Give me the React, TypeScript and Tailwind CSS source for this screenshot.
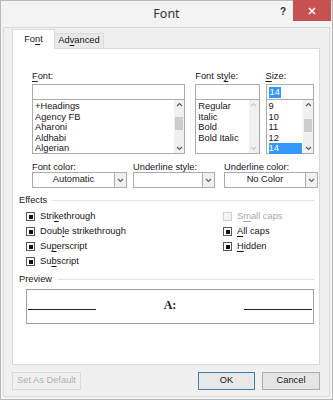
import React from 'react';

const FONT = "font-['Liberation_Sans','Noto_Sans',sans-serif]";

const U = ({ children }: { children: React.ReactNode }) => <span className="underline underline-offset-[1.5px]">{children}</span>;

const UpArrow = ({ dim }: { dim?: boolean }) => (
  <svg width="7" height="5" viewBox="0 0 7 5" className="block">
    <path d="M1 4 L3.5 1.5 L6 4" fill="none" stroke={dim ? '#c8c8c8' : '#606060'} strokeWidth="1.2" />
  </svg>
);

const DownArrow = ({ dim }: { dim?: boolean }) => (
  <svg width="7" height="5" viewBox="0 0 7 5" className="block">
    <path d="M1 1 L3.5 3.5 L6 1" fill="none" stroke={dim ? '#c8c8c8' : '#606060'} strokeWidth="1.2" />
  </svg>
);

interface ListProps {
  items: string[];
  selected?: string;
  thumb?: [number, number];
  dim?: boolean;
}

const ListBox: React.FC<ListProps> = ({ items, selected, thumb, dim }) => (
  <div className="flex h-[55px] border border-[#acacac] bg-white">
    <div className="flex-1 pl-[2px] pr-[1px] pt-[1px] leading-[10.6px]">
      {items.map((it) => (
        <div key={it} className={it === selected ? 'bg-[#3399ff] text-white' : ''}>{it}</div>
      ))}
    </div>
    <div className="flex w-[10px] flex-col items-center justify-between bg-[#f0f0f0] py-[2px]">
      <UpArrow dim={dim} />
      <div className="relative w-full flex-1">
        {thumb && (
          <div className="absolute left-[1px] right-[1px] bg-[#cdcdcd]" style={{ top: thumb[0], height: thumb[1] }} />
        )}
      </div>
      <DownArrow dim={dim} />
    </div>
  </div>
);

const Combo = ({ value, w }: { value?: string; w: string }) => (
  <div className={`flex h-[16px] border border-[#acacac] bg-white ${w}`}>
    <div className="flex flex-1 items-center justify-center leading-none">{value}</div>
    <div className="flex w-[12px] items-center justify-center border-l border-[#acacac] bg-[#f0f0f0]">
      <DownArrow />
    </div>
  </div>
);

const Check = ({ children, disabled }: { children: React.ReactNode; disabled?: boolean }) => (
  <div className={`flex h-[15px] items-center gap-[5px] ${disabled ? 'text-[#a8a8a8]' : ''}`}>
    <div className={`flex h-[9px] w-[9px] items-center justify-center border ${disabled ? 'border-[#d0d0d0] bg-[#f4f4f4]' : 'border-[#555] bg-white'}`}>
      {!disabled && <div className="h-[4px] w-[4px] bg-[#111]" />}
    </div>
    <span>{children}</span>
  </div>
);

const Section = ({ title }: { title: string }) => (
  <div className="flex h-[10px] items-center gap-[5px] leading-[10px]">
    <span>{title}</span>
    <div className="h-px flex-1 bg-[#e3e3e3]" />
  </div>
);

export default function App() {
  return (
    <div className={`flex h-[400px] w-[333px] flex-col border border-[#b9b9b9] bg-[#f3f3f3] text-[9.3px] text-[#151515] ${FONT}`}>
      {/* title bar */}
      <div className="relative flex h-[26px] shrink-0 items-start justify-center">
        <div className="pt-[4px] font-['Noto_Sans',sans-serif] text-[12.5px] text-[#333]">Font</div>
        <div className="absolute left-[279px] top-[3px] text-[10px] font-bold text-[#333]">?</div>
        <div className="absolute right-[1px] top-[-1px] flex h-[21px] w-[38px] items-center justify-center bg-[#c75050]">
          <svg width="8" height="8" viewBox="0 0 8 8">
            <path d="M1 1 L7 7 M7 1 L1 7" stroke="white" strokeWidth="1.6" />
          </svg>
        </div>
      </div>

      {/* body */}
      <div className="mx-[2px] mb-[2px] flex flex-1 flex-col border border-[#dadada] bg-[#f0f0f0] pl-[8px] pr-[9px]">
        {/* tabs */}
        <div className="mt-[1px] flex items-end">
          <div className="relative z-10 mb-[-1px] flex h-[20px] w-[43px] items-center justify-center border border-b-0 border-[#d9d9d9] bg-white">
            Fo<U>n</U>t
          </div>
          <div className="flex h-[15px] w-[49px] items-center justify-center border border-l-0 border-b-0 border-[#d9d9d9] bg-[#e9e9e9]">
            Ad<U>v</U>anced
          </div>
        </div>

        <div className="flex h-[317px] flex-col border border-[#d9d9d9] bg-white pl-[6px] pr-[5px]">
          {/* lists */}
          <div className="mt-[22px] flex pl-[13px]">
            <div className="flex w-[155px] flex-col">
              <div className="mb-[3px] h-[10px] leading-[10px]"><U>F</U>ont:</div>
              <div className="h-[15px] border border-b-0 border-[#acacac] bg-white" />
              <ListBox items={['+Headings', 'Agency FB', 'Aharoni', 'Aldhabi', 'Algerian']} thumb={[10, 13]} />
            </div>
            <div className="ml-[10px] flex w-[65px] flex-col">
              <div className="mb-[3px] h-[10px] leading-[10px]">Font st<U>y</U>le:</div>
              <div className="h-[15px] border border-b-0 border-[#acacac] bg-white" />
              <ListBox items={['Regular', 'Italic', 'Bold', 'Bold Italic']} dim />
            </div>
            <div className="ml-[6px] flex w-[49px] flex-col">
              <div className="mb-[3px] h-[10px] leading-[10px]"><U>S</U>ize:</div>
              <div className="flex h-[15px] items-center border border-b-0 border-[#acacac] bg-white pl-[2px]">
                <span className="bg-[#3399ff] px-[1px] leading-[11px] text-white">14</span>
              </div>
              <ListBox items={['9', '10', '11', '12', '14']} selected="14" thumb={[12, 13]} />
            </div>
          </div>

          {/* combos */}
          <div className="mt-[8px] flex pl-[13px]">
            <div className="flex w-[95px] flex-col">
              <div className="h-[10px] leading-[10px]">Font <U>c</U>olor:</div>
              <Combo value="Automatic" w="w-[95px]" />
            </div>
            <div className="ml-[6px] flex w-[82px] flex-col">
              <div className="h-[10px] leading-[10px]"><U>U</U>nderline style:</div>
              <Combo w="w-[82px]" />
            </div>
            <div className="ml-[9px] flex w-[94px] flex-col">
              <div className="h-[10px] leading-[10px]">Underl<U>i</U>ne color:</div>
              <Combo value="No Color" w="w-[94px]" />
            </div>
          </div>

          {/* effects */}
          <div className="mt-[7px]">
            <Section title="Effects" />
          </div>
          <div className="mt-[4px] flex pl-[7px]">
            <div className="flex w-[197px] flex-col">
              <Check>Stri<U>k</U>ethrough</Check>
              <Check>Doub<U>l</U>e strikethrough</Check>
              <Check>Su<U>p</U>erscript</Check>
              <Check>Su<U>b</U>script</Check>
            </div>
            <div className="flex flex-col">
              <Check disabled>S<U>m</U>all caps</Check>
              <Check><U>A</U>ll caps</Check>
              <Check><U>H</U>idden</Check>
            </div>
          </div>

          {/* preview */}
          <div className="mt-[5px]">
            <Section title="Preview" />
          </div>
          <div className="ml-[7px] mt-[5px] flex h-[35px] items-end border border-[#a0a0a0] px-[1px] pb-[12px]">
            <div className="mb-[1px] h-px w-[68px] bg-[#222]" />
            <div className="flex-1 text-center font-['Liberation_Serif',serif] text-[12px] font-bold leading-none text-[#222]">A:</div>
            <div className="mb-[1px] h-px w-[68px] bg-[#222]" />
          </div>
        </div>

        {/* buttons */}
        <div className="mt-[7px] flex items-center">
          <div className="flex h-[18px] w-[69px] items-center justify-center border border-[#dadada] bg-[#f0f0f0] text-[#b0b0b0]">
            Set As Default
          </div>
          <div className="ml-auto flex h-[18px] w-[57px] items-center justify-center border border-[#3c7fb1] bg-[#e8e8e8]">
            OK
          </div>
          <div className="ml-[7px] flex h-[18px] w-[58px] items-center justify-center border border-[#acacac] bg-[#e5e5e5]">
            Cancel
          </div>
        </div>
      </div>
    </div>
  );
}
